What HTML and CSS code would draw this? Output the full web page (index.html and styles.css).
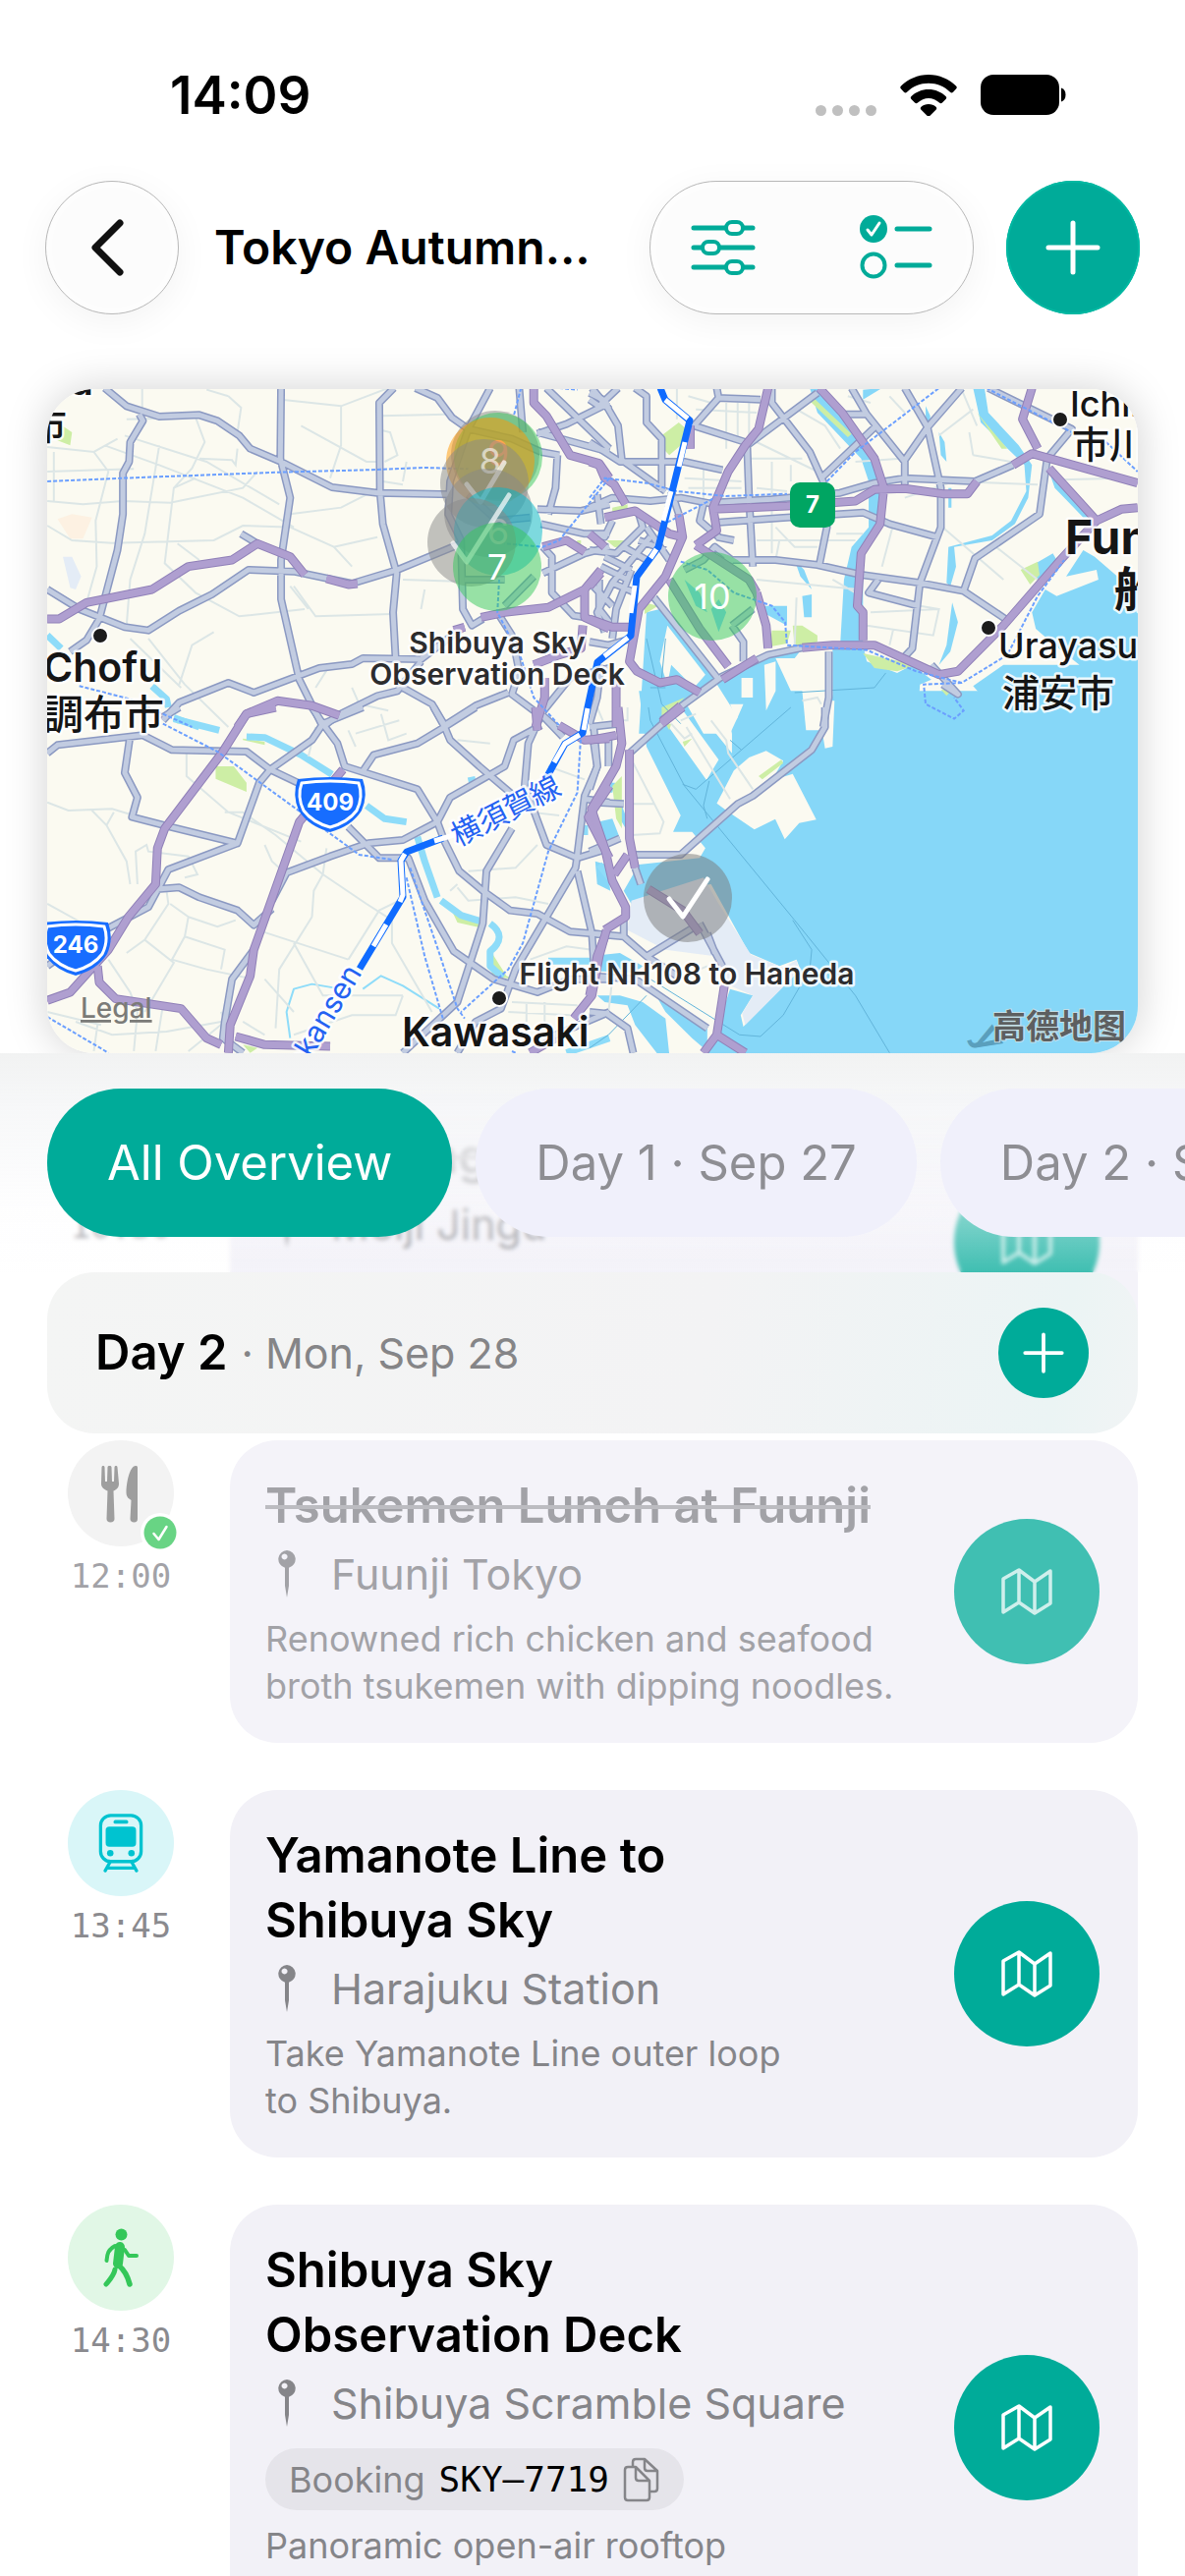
FILE: index.html
```html
<!DOCTYPE html>
<html lang="en">
<head>
<meta charset="utf-8">
<meta name="viewport" content="width=device-width, initial-scale=1">
<title>Tokyo Autumn</title>
<link rel="stylesheet" href="styles.css">
</head>
<body>
<svg class="defs" aria-hidden="true">
  <symbol id="i-map" viewBox="0 0 52 50">
    <path d="M2 12v34l16-10 16 11 16-10V4L34 15 18 3zM18 3v33M34 15v32" fill="none" stroke="currentColor" stroke-width="3.500" stroke-linejoin="round"/>
  </symbol>
  <symbol id="i-pin" viewBox="0 0 18 48">
    <path fill-rule="evenodd" d="M9 0a9 9 0 0 1 2 17.700V36L9 48 7 36V17.700A9 9 0 0 1 9 0zM6.500 3.500a3 3 0 1 0 .1 0z" fill="currentColor"/>
  </symbol>
  <symbol id="i-plus" viewBox="0 0 56 56">
    <path d="M28 3v50M3 28h50" fill="none" stroke="currentColor" stroke-width="5" stroke-linecap="round"/>
  </symbol>
</svg>
<div class="screen">
  <header class="status">
    <time>14:09</time>
    <div class="status-icons">
      <svg class="cell" viewBox="0 0 62 11" aria-hidden="true"><g fill="#c0c0c0"><circle cx="5.500" cy="5.500" r="5.500"/><circle cx="22.500" cy="5.500" r="5.500"/><circle cx="39.500" cy="5.500" r="5.500"/><circle cx="56.500" cy="5.500" r="5.500"/></g></svg>
      <svg class="wifi" viewBox="0 0 58 42" aria-hidden="true"><path d="M29 0C40 0 50 4.500 57 11.500c1 1 1 2 0 3l-3 3.200c-1 1-2 1-3 0C45 12 37.500 8.800 29 8.800S13 12 7 17.700c-1 1-2 1-3 0L1 14.500c-1-1-1-2 0-3C8 4.500 18 0 29 0z"/><path d="M29 15c7 0 13 2.700 17.500 7 1 1 1 2 0 3L43 28.500c-1 1-2 1-3 0-3-2.700-7-4.500-11-4.500s-8 1.800-11 4.500c-1 1-2 1-3 0L11.500 25c-1-1-1-2 0-3C16 17.700 22 15 29 15z"/><path d="M29 30c3 0 5.500 1 7.500 2.700 1 1 1 2 0 3l-6 6c-1 1-2 1-3 0l-6-6c-1-1-1-2 0-3C23.500 31 26 30 29 30z"/></svg>
      <svg class="batt" viewBox="0 0 88 42" aria-hidden="true"><rect width="80" height="41" rx="13"/><path d="M82 13.500c3 1 4.500 3.500 4.500 7s-1.500 6-4.500 7z"/></svg>
    </div>
  </header>

  <nav class="toolbar">
    <button class="glass round" aria-label="Back"><svg class="chev" viewBox="0 0 44 58"><path d="M30 4 5 29l25 25" fill="none" stroke="#111" stroke-width="7" stroke-linecap="round" stroke-linejoin="round"/></svg></button>
    <h1>Tokyo Autumn…</h1>
    <div class="glass group">
      <button aria-label="Filter"><svg class="sliders" viewBox="0 0 66 56"><g fill="none" stroke="currentColor" stroke-width="5" stroke-linecap="round"><path d="M3 8h32M54 8h9M3 28h8M31 28h32M3 48h32M54 48h9"/><g stroke-width="4"><rect x="36" y="2" width="17" height="12" rx="6"/><rect x="12" y="22" width="17" height="12" rx="6"/><rect x="36" y="42" width="17" height="12" rx="6"/></g></g></svg></button>
      <button aria-label="Checklist"><svg class="check" viewBox="0 0 74 66"><circle cx="14" cy="14" r="14" fill="currentColor"/><path d="m8 15 4 5 8-12" fill="none" stroke="#fff" stroke-width="3" stroke-linecap="round" stroke-linejoin="round"/><circle cx="14" cy="51" r="11.500" fill="none" stroke="currentColor" stroke-width="4"/><path d="M38 14h33M38 51h33" stroke="currentColor" stroke-width="5" stroke-linecap="round"/></svg></button>
    </div>
    <button class="accent round" aria-label="Add"><svg class="plus-l"><use href="#i-plus"/></svg></button>
  </nav>

  <section class="map" aria-label="Trip map">
  <svg viewBox="0 0 1110 676" preserveAspectRatio="xMidYMid slice">
    <defs>
      <g id="roads">
        <path transform="matrix(.37 0 0 .3333 -8 -6)" d="M180 15L240 70 330 102 440 97 490 115 550 160 580 200 665 240 805 318 930 335 1135 340M665 15L663 230 690 350 665 540 665 660 715 905 780 1050M975 15L935 60 937 330 945 430 983 580 973 700 980 840M275 95L285 115 250 180 247 240 230 275 230 400 215 510 165 720 130 785 85 820M22 630L110 690 235 745 300 755 385 695 475 645 575 570 700 575 860 612 985 570 1160 490M555 460L600 490M340 1030L385 975 520 915 590 945 770 870 860 858 890 840 1050 843 1160 750M780 1050L820 1015 930 955 985 940 1050 850M1035 15L1095 45 1135 105 1180 140 1240 15M1180 140L1130 300 1125 400 1160 480 1165 690 1190 740 1220 720M1000 930L1080 980 1115 1045 1200 985 1290 945M1320 15L1330 150M1395 15L1568 200M1568 60L1450 125 1370 155M1370 150L1568 210M1425 220L1420 320 1400 400M1380 210L1430 220M1180 340L1260 420 1350 410M1370 385L1490 390 1568 370M1380 430L1500 460 1568 460M1385 500L1410 530 1410 640 1470 710 1500 715M1385 580L1500 520 1568 500M1260 700L1300 770 1320 880 1300 950 1360 1000M1540 600L1540 690 1568 730M1568 870L1460 900 1380 1010 1420 1050M1170 600L1280 600M1360 590L1280 680M1180 140L1300 170 1380 210M1520 15L1568 80"/>
        <path transform="matrix(.3865 0 0 .3333 552 -6)" d="M0 30L35 50 75 130 85 235 200 330M75 15L25 70 0 50M120 15L150 40 150 120 190 170 190 330M335 15L340 45 275 130M335 45L450 50M275 130L410 180M0 180L80 240 250 240 350 265M480 15V60L580 210 615 300 625 440 605 555M600 30L415 190 420 350 430 560M320 365L480 355 660 335 750 305 830 290 1015 300 1115 250M340 425L500 412 720 395 790 430 915 470 870 610 850 810 830 835M355 540L490 540 600 555 715 585 870 610 985 635 1095 720M665 95L730 95 690 15M730 95L830 240 830 310M830 15L890 135 980 15M890 135L830 235M890 135L925 320 925 440 870 610M755 130L610 290M1050 15L1270 140 1205 230 1185 400 1015 535 985 635M560 808L470 830 350 895 190 1030M170 655L340 905M375 740L405 790 405 850M375 740L430 690M630 820L630 960 615 1050M760 600L735 640 865 680M0 380L60 350 160 360 240 350 330 370M300 370L290 420 340 470M335 470L380 480M0 460L40 470 60 420M0 510L70 520 140 440 130 400M160 470L60 610 20 700 40 760M110 570L70 690 60 780M40 530L110 570M90 500L150 540M130 480L200 510M60 610L120 640M10 620L60 680M100 600L30 560M150 440L210 540M215 330L235 400M20 340L30 430M0 790L50 800 110 780M30 860L20 960 0 1040M380 545L330 500 300 540 250 570M900 860L970 950 930 920"/>
        <path transform="matrix(.37 0 0 .3333 -8 324)" d="M22 140L50 115 285 85 365 130 570 135 635 190 750 100 780 50M340 30L385 0M635 190L605 230 545 415 360 365 255 335 270 275 235 200 250 85M545 415L355 495 300 610 180 680M22 790L60 760M635 190L720 235M325 555L385 550 440 580 545 620 590 665 640 615M640 590L680 505 800 455 905 415 1000 405 1095 350 1130 275 1225 215 1280 180 1305 100 1380 55M750 0L780 50 890 0M780 50L820 110 840 180 1040 250 1095 350 1115 410 1155 500 1220 560 1295 620 1370 630 1460 685 1568 695M890 195L920 145 1040 110 1115 60 1200 0M1085 0L1115 60 1130 100 1210 180 1300 265M850 365L935 460 1015 460 1060 590 1140 745 1250 830 1370 870 1460 830 1568 830M1300 370L1230 500 1220 660 1150 900 1000 1055M1390 0L1345 110 1335 240 1395 420 1480 460 1568 430M1480 450L1475 490 1310 800 1270 920 1200 960 1150 1055M1480 500L1520 690 1525 780M1525 60L1535 180 1500 270 1480 450M1500 280L1568 290M590 740L530 830 510 960 505 1010 560 1055M1380 20L1440 90M1400 1010L1568 930"/>
        <path transform="matrix(.3865 0 0 .3333 552 324)" d="M240 0L105 140M120 490L135 540M120 450L240 450 390 295 430 270 585 130 620 60 620 0M0 60L75 50M10 100L20 180 0 250M50 80L50 180M20 290L90 295M0 440L80 400M0 690L90 700 150 760 270 675M90 640L90 700M150 760L230 820M290 660L350 790M310 690L330 750M0 820L120 830 310 980M0 930L45 935 100 980 115 1055"/>
      </g>
      <g id="express">
        <path transform="matrix(.37 0 0 .3333 -8 -6)" d="M22 720L55 720 130 670 310 630 410 560 530 540 600 490 690 530 730 585M790 597L850 615 875 612M545 1050L570 1010 655 970 750 985 825 1015M1215 715L1280 700 1400 685 1500 630 1545 570M1360 15L1360 60 1395 100 1460 220 1540 245 1568 290M1385 500L1450 480 1500 515M1500 630L1500 715 1568 750M1495 740L1490 810 1430 830 1360 860M1390 900L1390 960 1365 1050M1140 755L1170 745"/>
        <path transform="matrix(.3865 0 0 .3333 552 -6)" d="M470 15L445 140 410 190 365 270 325 380 335 450 280 495M325 385L520 375 700 360 750 325 830 322 930 338 995 338 1020 300M1115 250L1165 215 1443 305M605 15L665 90 750 230 775 320 765 430 715 520 705 680 720 700 720 785M1165 15L1140 110 1180 200M1210 260L1335 420 1240 540 1180 620 1090 740 970 880 920 890 750 800 640 800 560 808M1335 420L1400 385 1443 380M210 600L290 750 365 865M440 640L465 740 470 810M280 495L420 600 440 640M40 410L120 390 210 460 245 470 200 590 130 690 105 850 125 880 185 915 230 905 290 945M0 240L25 250 40 290 65 310 95 370M235 400L245 470M0 720L60 745 130 745M70 900L70 1050M440 840L350 905M240 985L190 1035M265 130V200M0 460L40 500M0 620L30 580"/>
        <path transform="matrix(.37 0 0 .3333 -8 324)" d="M650 0L570 20 505 135 345 370 325 430 320 540 245 640 190 740 85 870 22 895M835 190L715 350 590 740 580 820 525 970 520 1055M1568 240L1510 335 1568 460M1365 0L1370 70M1430 55L1500 100 1568 95M1560 680L1540 760 1520 880 1470 950M160 790L165 840 210 890 390 920 460 1010 500 1030M540 1005L620 1030 800 1035M1350 1055L1420 1010"/>
        <path transform="matrix(.3865 0 0 .3333 552 324)" d="M245 0L190 50M105 130V400L120 490M155 555L245 620 290 690M75 0L85 110 70 180 5 310 40 430 60 530 95 610 95 640 40 680M100 450L65 510M355 850L335 1000 300 1055M335 1000L410 1055M40 700L20 760 0 880M0 100L70 85"/>
      </g>
      <g id="shield"><path d="M-33-26Q0-30 33-26 39-10 32 6 22 22 0 28-22 22-32 6-39-10-33-26z" fill="#176dff"/><path d="M-29-22Q0-26 29-22 34-8 27 6 18 18 0 23-18 18-27 6-34-8-29-22z" fill="none" stroke="#fff" stroke-width="3"/></g>
    </defs>
    <rect width="1110" height="676" fill="#fbfaf1"/>
    <g fill="#86d7f8">
      <path transform="matrix(.3865 0 0 .3333 552 -6)" d="M150 700L185 690 210 730 270 785 340 890 420 850 520 812 560 818 660 800 670 600 690 500 735 440 735 300 715 230 600 90 580 15 610 15 660 90 745 230 775 320 765 430 720 520 720 800 730 850 810 885 850 860 900 905 870 920 865 1000 960 1030 1000 990 1010 1060 1080 1060 1078 1015 1010 925 1090 860 1290 860 1225 800 1175 750 1165 700 1200 630 1230 650 1340 600 1335 570 1255 590 1300 510 1330 530 1390 590 1450 640V1070H130z"/>
      <path transform="matrix(.3865 0 0 .3333 552 -6)" d="M1010 15H1040L1050 90 1130 190 1165 250 1155 350 1120 430 1060 480 960 500 965 560 950 620 940 610 945 500 1060 465 1110 420 1150 330 1145 250 1030 120zM1210 270L1330 410 1300 410 1225 320zM540 540l15 50 30 40-20-60zM955 670l15 60-20 90-30 40 20-60zM885 70l12 30v50l-12-40zM920 150l15 30 5 60-15-20zM945 320h8v60h-8zM720 20l50-5-50 35zM250 600l40 40 20 60-30-20zM320 690l20-30 20 40-20 60zM560 650l25-5v70h-20zM440 680h80v60l-80-50zM1160 560l60-40 10 20-50 60z"/>
      <path transform="matrix(.3865 0 0 .3333 552 324)" d="M130-50L150 120 240 330 220 380 270 380 305 430 290 460 130 480 110 520 90 560 110 600 200 560 320 540 420 750 500 790 545 770 555 800 405 975 398 940 430 880 370 860 330 1000 300 1060H1450V-50zM50 200h25l-15 60h-15zM75 270l20 60v40l-20-40zM20 350l40-10 20 60-40 30zM15 470l30 10 10 80-35-20zM0 760l80-10 60 40-20 20-120-5zM20 880l60 0 60 20 60 50 10 110h-30l-60-90-20-60-60-10zM160 850l60 60 90 70 0 70-40-40-70-80z"/>
    </g>
    <g fill="#fbfaf1">
      <path transform="matrix(.3865 0 0 .3333 552 -6)" d="M205 740l40 60 60 90-30 40-60-70-10 60-20-70zM490 840h50l20-30h80v140l-10 110h-60l-10-120h-30zM460 860l30-10v90l-25 60zM250 970l80-60 60 110-20 50h-70zM400 900h30v60h-30z"/>
      <path transform="matrix(.3865 0 0 .3333 552 324)" d="M190 30L240 0 340 160 308 222zM300 0h60l15 80 0 60-70-100zM370-10h35l-18 48zM565-20h80l-5 140-20 5-10-70-40 0zM335 293l45-100 40-40 45-20 45 30-30 60 55-20 62 140-45 10-38 50-25-62-55 32-70-55zM60 30h60v200h-60z"/>
    </g>
    <path transform="matrix(.3865 0 0 .3333 552 324)" d="M110 590L300 520 340 600 425 755 510 795 545 772 552 805 410 970 402 935 430 880 370 850 330 760 200 740 100 680z" fill="#e4ecf6"/>
    <g fill="#cdeea5">
      <path transform="matrix(.3865 0 0 .3333 552 -6)" d="M190 160l45-40 20 20-15 50-30 30-25-30zM60 380l40-10v30h-40zM45 480h65l-5 30-40-10zM1135 570l45-25 5 40-25 30zM145 670l35 10-35 25zM720 825l140 35-50 20-60-10zM480 755l50 0-10 40-45 10zM535 740h25l40 30v20l-60 20zM590 45l100 110-10 10-100-110zM1020 90l80 110h-15zM190 990l60-30-60 70zM925 935h30l-15 20z"/>
      <path transform="matrix(.37 0 0 .3333 -8 324)" d="M485 180l50 0 35 50v28l-85-40zM370 28l40 12-30 10zM560 95l60 10 0 10-60-15zM1130 610l80 50v12l-60-15zM1245 750l40 70 20 10-60-10zM560 1030l40 10-20 15z"/>
      <path transform="matrix(.3865 0 0 .3333 552 324)" d="M445 210l60-50 5 10-55 50zM60 240l25-30 0 160-15-30zM200 50l15 0-5 20zM245 105l25-10-20 25z"/>
      <path transform="matrix(.37 0 0 .3333 -8 -6)" d="M50 120l40 30-5 40-35-15zM1480 480h10v15h-15z"/>
    </g>
    <path fill="#fdf1e2" transform="matrix(.37 0 0 .3333 -8 -6)" d="M50 415L90 400 145 410 120 475 85 475z"/>
    <path fill="#e4ecf6" transform="matrix(.37 0 0 .3333 -8 -6)" d="M65 530L90 530 115 590 100 630 85 625z"/>
    <g fill="none" stroke="#8edcf9" stroke-width="7" stroke-linejoin="round">
      <path transform="matrix(.37 0 0 .3333 -8 -6)" d="M22 770L60 810M310 925L350 965 355 990M370 1022L440 1050"/>
      <path transform="matrix(.37 0 0 .3333 -8 324)" d="M370 35L495 70M570 90L620 92 720 145 805 205M900 300L950 340 1010 350M1040 395L1060 470 1095 580M1105 590L1160 635 1220 655M1240 660Q1290 700 1240 745L1240 790 1275 825M1400 775H1540M1180 225L1200 220M1500 360V390M1540 480L1568 520M1450 1055L1568 1010"/>
      <path stroke-width="2" transform="matrix(.37 0 0 .3333 -8 324)" d="M890 860L940 820 1000 850 1100 920M690 1010L680 930 700 860 750 845 830 860"/>
    </g>
    <g class="lane">
      <path transform="matrix(.3865 0 0 .3333 552 324)" d="M155 0L160 40 250 240 540 650 700 880 790 1055M535 650L585 740 580 800 510 940 450 1005 395 1000 160 830M245 235L280 250 530 0M315 225L300 300 310 340M370 100L400 130M0 1040L50 1000 150 880"/>
      <path transform="matrix(.3865 0 0 .3333 552 -6)" d="M540 945L750 930 780 885M160 930L200 930M150 780L190 980 240 1040M200 780L190 900"/>
    </g>
    <g class="minor">
      <path transform="matrix(.37 0 0 .3333 -8 -6)" d="M283 15V95M22 195L150 210 215 170M150 210L190 270 155 420 158 560 130 670M180 190L330 250 560 350 700 440M235 160L460 240 660 370M240 110L430 105 455 180 420 260 370 320 345 550 430 640 550 712 730 690M330 190L290 460 250 600 240 740M22 360L120 370 230 360 360 365 560 320 600 270M40 210V360M22 435L90 480 200 488 480 480 560 435 700 440M370 320L430 290M520 40L555 75 545 150M440 230L530 235 540 250 545 200M460 20L520 40M665 50L830 70 960 15M830 70L830 190 800 290M720 130L900 240 930 240M940 100L1120 95M945 145L965 150 985 220 950 240M690 400L830 380 900 340M690 440L810 500 860 560M810 500L930 470M700 620L760 712 970 705M690 620L740 690M380 490L440 540M480 760L420 800 385 920M300 780L400 920 520 1050M250 780L390 930M1000 300L1010 240M945 300L1000 310M1050 690L1060 630M1000 600L1150 605M860 930L880 980 960 1000M800 860L760 930M22 270L260 262"/>
      <path transform="matrix(.3865 0 0 .3333 552 -6)" d="M230 15V110M260 40L320 60M280 80L440 90M360 60V200M390 60V170M420 60V180M440 180L600 270M420 230H560M480 240V520M530 250V300M250 290L400 300M260 320H400M300 240V400M350 290V360M440 320L520 330M440 480H700M490 440L540 500 600 500M640 600L700 640M440 600L710 630M545 655L540 800M800 430L770 560M930 440L1090 600M830 350L960 300 1180 310M1000 150L1010 220M1010 220L1110 240M980 20L1020 130M920 160L1010 80M1070 500L1180 600M650 460H720M740 700L920 690 905 770 730 740M800 750L790 800M870 680L920 690M1240 295L1400 290M560 970L600 960 610 980M680 40L740 60M790 40L830 90M700 240L820 230M500 480L490 540M545 80L620 130 660 200"/>
      <path transform="matrix(.37 0 0 .3333 -8 324)" d="M22 290L80 315 200 310 260 330M145 315L185 360 240 470 250 540M185 360L205 320M270 540L265 440 295 420 300 440 410 455 435 510 400 520M22 600L120 660 190 750M350 560L355 600 290 710 240 750M360 600L410 640 400 700 365 770 460 800 590 830M290 710L370 780 290 930M410 640L490 670 540 650M400 700L510 740 500 800M190 770L250 870 270 930M405 130V210L520 320 720 410M510 320L560 320 650 390 780 510 900 600 970 650 970 720 1080 930M620 420L640 470 680 510M750 640L755 560 780 510 790 430M850 770L935 620 990 590M600 680L850 770M750 640L660 800 650 980M700 720L780 880 900 880 1000 880M700 1000L860 940 980 940 1000 880M620 830L700 930M100 960L200 1000 350 990 500 960M160 970L150 1050M270 930L260 1050M22 930L170 970M340 910L320 1050M560 960L620 1000M870 80L990 40M850 70L870 120M1150 550L1180 590 1310 580 1400 600M1180 500L1310 490 1370 420M1130 560L1150 540M940 20L960 100 1010 80M1280 250L1350 320 1430 330M1400 180L1500 220M1240 110L1150 100M1350 770L1450 730 1520 740M1300 900L1480 910M1290 930L1460 940M1340 900V960M1390 900V980M500 930L510 960 410 1050M760 60L740 150"/>
      <path transform="matrix(.3865 0 0 .3333 552 324)" d="M115 170L195 350 185 385 110 390M110 295H170M255 60L370 280M320 40L360 100 365 140 430 250M240 40L280 20M215 50L250 95 270 80M250 820L310 790M60 830L50 930M20 0L35 40M100 0V40H80"/>
    </g>
    <use href="#roads" class="casing"/><use href="#roads" class="fill"/>
    <use href="#express" class="ex-casing"/><use href="#express" class="ex-fill"/>
    <g class="rail">
      <path transform="matrix(.37 0 0 .3333 -8 -6)" d="M22 300L230 290 660 272 900 265 1060 258 1180 262M1325 15L1305 100M1568 290L1430 480 1385 500 1280 490M1265 600L1260 700 1325 840 1360 960 1430 1045M110 925L250 965 420 1050M1430 15L1480 20"/>
      <path transform="matrix(.3865 0 0 .3333 552 -6)" d="M0 350L40 290 150 305 230 330 360 345 520 338M205 425L330 350M625 300L700 210 920 15M1045 15L1270 150M1360 180L1443 270M240 545L310 570 380 640 480 680 515 730 520 800 730 815 860 880 980 915 1100 830 1180 650 1250 540M980 915L880 920 885 980 960 1025 985 1000 960 960"/>
      <path transform="matrix(.37 0 0 .3333 -8 324)" d="M340 50L490 135 880 450 970 465M1010 520L1060 760 1110 950M1020 490L1100 750 1150 920 1170 950M1490 80L1480 260 1400 440 1330 720 1290 800 1160 930M22 945L190 1055M1300 1050L1310 1055"/>
    </g>
    <path class="tr-case" d="M624 -1L629 11 654 32 622 161 600 191 594 251 560 278 550 324 545 350 527 361 508 396M403 457L366 471 360 480 362 517 318 590"/>
    <path class="tr-gap" d="M629 11L652 30M649 54L643 79M635 104L627 134M620 163L614 172M598 200L594 228M591 253L567 272M550 325L546 347M542 352L527 361 516 380M420 452L394 460M364 473L360 480 362 515 359 522M345 545L332 567"/>

    <g class="pins">
      <circle cx="456" cy="67" r="45" fill="#888"/>
      <circle cx="459" cy="69" r="45" fill="#34c759"/>
      <text class="nine" x="459" y="78">9</text>
      <circle cx="451" cy="74" r="45" fill="#ff9500"/>
      <circle cx="445" cy="96" r="45" fill="#888"/>
      <text x="451" y="86">8</text>
      <path d="M427 97l14 18 24-40"/>
      <circle cx="449" cy="126" r="45" fill="#888"/>
      <circle cx="459" cy="145" r="45" fill="#00b8cc"/>
      <text x="459" y="158">6</text>
      <circle cx="432" cy="156" r="45" fill="#888"/>
      <path d="M413 157l14 19 43-68"/>
      <circle cx="458" cy="181" r="45" fill="#34c759"/>
      <text class="solid" x="458" y="194">7</text>
      <circle cx="677" cy="211" r="45" fill="#34c759"/>
      <text class="solid" x="677" y="224">10</text>
      <circle cx="652" cy="518" r="45" fill="#777"/>
      <path class="solid" d="M633 519l14 18 25-38"/>
    </g>

    <g fill="#1c1c1c" stroke="#fff" stroke-width="2"><circle cx="54" cy="251" r="8"/><circle cx="1031" cy="31" r="8"/><circle cx="958" cy="243" r="8"/><circle cx="460" cy="620" r="8"/></g>
    <use href="#shield" x="288" y="423"/><use href="#shield" x="29" y="569"/>
    <rect x="756" y="95" width="46" height="46" rx="10" fill="#00a562"/>
    <g class="route"><text x="288" y="429">409</text><text x="29" y="574">246</text><text x="779" y="126">7</text></g>

    <g class="place">
      <text x="-4" y="298" class="mid">Chofu</text>
      <text x="-4" y="346" class="cjk big">調布市</text>
      <text x="-18" y="51" class="cjk">市</text>
      <text x="-2" y="6" class="mid">da</text>
      <text x="1041" y="28" class="reg">Ichikawa</text>
      <text x="1043" y="70" class="cjk">市川</text>
      <text x="1036" y="168" class="large">Funabashi</text>
      <text x="1086" y="221" class="cjk xl">船橋</text>
      <text x="968" y="274" class="reg">Urayasu</text>
      <text x="972" y="323" class="cjk">浦安市</text>
      <text x="361" y="669" class="mid">Kawasaki</text>
    </g>
    <g class="poi"><text x="458" y="269">Shibuya Sky</text><text x="458" y="301">Observation Deck</text><text x="651" y="606">Flight NH108 to Haneda</text></g>
    <g class="line-name"><text transform="translate(418 466) rotate(-27)">横須賀線</text><text transform="translate(321 594) rotate(-59)" text-anchor="end">Shinkansen</text></g>
    <text class="bay" transform="translate(942 657) rotate(60)">y</text>
    <text class="legal" x="34" y="640">Legal</text>
    <text class="brand" x="962" y="661">高德地图</text>
  </svg>
  </section>

  <main class="schedule">
    <div class="tabs" role="tablist">
      <button role="tab" aria-selected="true" class="tab on">All Overview</button>
      <button role="tab" aria-selected="false" class="tab">Day 1 · Sep 27</button>
      <button role="tab" aria-selected="false" class="tab">Day 2 · Sep 28</button>
    </div>
    <header class="day">
      <h2>Day 2</h2><span class="date">· Mon, Sep 28</span>
      <button class="accent add" aria-label="Add to Day 2"><svg class="plus-s"><use href="#i-plus"/></svg></button>
    </header>

    <ol class="timeline">
      <li class="stop done">
        <div class="when"><span class="badge grey"></span><time>10:30</time></div>
        <article class="card">
          <div class="info"><h3>Meiji Jingu Shrine</h3><p class="loc"><svg class="pin"><use href="#i-pin"/></svg>Meiji Jingu</p></div>
          <button class="go" aria-label="Open in map"><svg><use href="#i-map"/></svg></button>
        </article>
      </li>
      <li class="stop done">
        <div class="when"><span class="badge grey">
          <svg class="icon" viewBox="0 0 60 60"><path fill="currentColor" d="M12 2c1 0 1.500.6 1.500 1.500L14 18h2l.5-14.500C16.500 2.600 17 2 18.500 2S20.500 2.600 20.500 3.500L21 18h2l.5-14.500C23.500 2.600 24 2 25 2s1.500.6 1.500 1.500L28 20c0 4-2 6-5.500 7.500L23.500 56c0 2-1.500 3.500-4 3.500S15.500 58 15.500 56l1-28.500C13 26 10 24 10 20l.5-16.500C10.500 2.600 11 2 12 2zM45 2c1.500 0 2 .6 2 2v52c0 2-1 3.500-3.500 3.500S39.500 58 39.500 56L40.500 37C37 35 35.500 33 35.500 29 36 15 40 2 45 2z"/></svg>
          <svg class="tick" viewBox="0 0 40 40"><circle cx="20" cy="20" r="20" fill="#fff"/><circle cx="20" cy="20" r="16.500" fill="#68d484"/><path d="m13.500 21 5 6 8-13" fill="none" stroke="#fff" stroke-width="2.500" stroke-linecap="round" stroke-linejoin="round"/></svg>
        </span><time>12:00</time></div>
        <article class="card">
          <div class="info"><h3>Tsukemen Lunch at Fuunji</h3><p class="loc"><svg class="pin"><use href="#i-pin"/></svg>Fuunji Tokyo</p><p class="note">Renowned rich chicken and seafood<br>broth tsukemen with dipping noodles.</p></div>
          <button class="go" aria-label="Open in map"><svg><use href="#i-map"/></svg></button>
        </article>
      </li>
      <li class="stop">
        <div class="when"><span class="badge cyan">
          <svg class="icon" viewBox="0 0 60 64"><rect x="8" y="2" width="44" height="50" rx="11" fill="none" stroke="currentColor" stroke-width="3.500"/><rect x="22" y="7" width="16" height="4" rx="2" fill="currentColor"/><rect x="13.500" y="14" width="33" height="22" rx="4" fill="currentColor"/><circle cx="18.500" cy="43" r="3.500" fill="currentColor"/><circle cx="41.500" cy="43" r="3.500" fill="currentColor"/><path d="m18 53-5 9M42 53l5 9M16 59h28" stroke="currentColor" stroke-width="3.500" stroke-linecap="round"/></svg>
        </span><time>13:45</time></div>
        <article class="card">
          <div class="info"><h3>Yamanote Line to<br>Shibuya Sky</h3><p class="loc"><svg class="pin"><use href="#i-pin"/></svg>Harajuku Station</p><p class="note">Take Yamanote Line outer loop<br>to Shibuya.</p></div>
          <button class="go" aria-label="Open in map"><svg><use href="#i-map"/></svg></button>
        </article>
      </li>
      <li class="stop">
        <div class="when"><span class="badge green">
          <svg class="icon" viewBox="0 0 60 60"><g fill="none" stroke="currentColor" stroke-linecap="round" stroke-linejoin="round"><path d="M29 19l-2 17" stroke-width="10"/><path d="M24 18c-7 4-8 8-8.500 15" stroke-width="4"/><path d="M28 38c6 5 9 11 11 19" stroke-width="5.500"/><path d="M24 42c-1 6-5 10-9 15" stroke-width="5"/><path d="M34 22l4 6h8" stroke-width="4"/></g><circle cx="30.500" cy="6.500" r="6" fill="currentColor"/></svg>
        </span><time>14:30</time></div>
        <article class="card">
          <div class="info"><h3>Shibuya Sky<br>Observation Deck</h3><p class="loc"><svg class="pin"><use href="#i-pin"/></svg>Shibuya Scramble Square</p>
            <button class="booking"><span>Booking</span><b>SKY–7719</b><svg viewBox="0 0 38 46"><g fill="none" stroke="currentColor" stroke-width="2.500" stroke-linejoin="round"><path d="M10 10V5q0-3 3-3h9l13 12v18q0 3-3 3h-4M22 2v9q0 3 3 3h10"/><path d="M5 10h8l14 14v17q0 3-3 3H5q-3 0-3-3V13q0-3 3-3zM13 10v11q0 3 3 3h11"/></g></svg></button>
            <p class="note">Panoramic open-air rooftop<br>above Shibuya Crossing.</p></div>
          <button class="go" aria-label="Open in map"><svg><use href="#i-map"/></svg></button>
        </article>
      </li>
    </ol>
  </main>
</div>
</body>
</html>
```
FILE: styles.css
```css
* { box-sizing: border-box; margin: 0; padding: 0; }
body { background: #fff; color: #000; font-family: Inter, "Noto Sans CJK JP", sans-serif; }
button { border: 0; background: none; font: inherit; color: inherit; cursor: pointer; }
svg { display: block; }
.defs { position: absolute; width: 0; height: 0; }
.screen { height: 100vh; display: flex; flex-direction: column; overflow: hidden; }

.status { flex: none; height: 184px; padding: 66px 120px 0 173px; display: flex; justify-content: space-between; align-items: flex-start; }
.status time { font-size: 53px; line-height: 62px; font-weight: 600; }
.status-icons { display: flex; align-items: flex-end; gap: 24px; padding-top: 10px; }
.cell { width: 62px; height: 11px; }
.wifi { width: 58px; height: 42px; }
.batt { width: 88px; height: 42px; }

.toolbar { flex: none; display: flex; align-items: center; padding: 0 46px; height: 136px; }
.toolbar h1 { flex: 1; min-width: 0; margin-left: 36px; font-size: 48px; line-height: 60px; font-weight: 600; white-space: nowrap; }
.round { width: 136px; height: 136px; border-radius: 50%; display: grid; place-items: center; flex: none; }
.glass { background: #fcfcfc; border: 1px solid #b8b8b8; box-shadow: 0 8px 36px rgba(0,0,0,.05), inset 0 0 16px #fff; }
.chev { width: 44px; height: 58px; }
.group { height: 136px; width: 330px; margin-right: 33px; border-radius: 68px; display: flex; justify-content: space-between; padding: 0 41px; align-items: center; color: #00ab99; }
.sliders { width: 66px; height: 56px; }
.check { width: 74px; height: 66px; }
.accent { background: #00ab99; color: #fff; box-shadow: inset 0 0 0 2px #00b8a2; }
.plus-l { width: 56px; height: 56px; }

.map { flex: none; margin: 76px 48px 0; aspect-ratio: 1110 / 676; border-radius: 48px; overflow: hidden; box-shadow: 0 0 44px rgba(0,0,0,.18); }
.map svg { width: 100%; height: 100%; }
.map path { vector-effect: non-scaling-stroke; }
.minor { fill: none; stroke: #dce6e6; stroke-width: 2; }
.lane { fill: none; stroke: #62b4da; stroke-width: 1; }
.casing { fill: none; stroke: #8b99c2; stroke-width: 8; stroke-linejoin: round; }
.fill { fill: none; stroke: #c2cce1; stroke-width: 5; stroke-linejoin: round; }
.ex-casing { fill: none; stroke: #9080b8; stroke-width: 9; stroke-linejoin: round; }
.ex-fill { fill: none; stroke: #af9fd0; stroke-width: 7; stroke-linejoin: round; }
.rail { fill: none; stroke: #6b9fff; stroke-width: 2; stroke-dasharray: 4 2; }
.tr-case { fill: none; stroke: #0f6bff; stroke-width: 7; stroke-linejoin: round; }
.tr-gap { fill: none; stroke: #fff; stroke-width: 5; stroke-linejoin: round; }
.pins circle { fill-opacity: .5; }
.pins text { fill: #fff; font-size: 36px; text-anchor: middle; opacity: .6; }
.pins .nine { fill: #ffb0a0; opacity: 1; }
.pins path { fill: none; stroke: #fff; stroke-width: 5; stroke-linecap: round; stroke-linejoin: round; opacity: .7; }
.pins .solid { opacity: 1; }
.place, .poi, .line-name { paint-order: stroke; stroke: #fff; stroke-opacity: .85; stroke-width: 5; stroke-linejoin: round; }
.place { fill: #151515; }
.place .mid { font-size: 41px; font-weight: 600; }
.place .reg { font-size: 36px; font-weight: 500; }
.place .large { font-size: 48px; font-weight: 700; }
.place .cjk { font-family: "Noto Sans CJK JP", sans-serif; font-size: 38px; font-weight: 500; }
.place .big { font-size: 41px; }
.place .xl { font-size: 48px; font-weight: 700; }
.poi { fill: #2c2c2e; font-size: 30px; font-weight: 600; text-anchor: middle; }
.line-name { fill: #2462f2; font-size: 30px; }
.route { fill: #fff; font-size: 24px; font-weight: 700; text-anchor: middle; }
.bay { fill: #5a9fbd; font-size: 41px; font-weight: 600; }
.legal { fill: #7b7b78; font-size: 28px; font-weight: 500; text-decoration: underline; }
.brand { fill: #5d5f60; font-family: "Noto Sans CJK SC", sans-serif; font-size: 34px; font-weight: 700; paint-order: stroke; stroke: #c4dfe8; stroke-width: 2; }

.schedule { position: relative; flex: 1; min-height: 0; }
.tabs { position: absolute; z-index: 2; inset: 0 0 auto; height: 223px; padding: 36px 48px; display: flex; gap: 24px; overflow: hidden; backdrop-filter: blur(2px); background: linear-gradient(rgba(241,242,242,.97), rgba(246,247,248,.9) 25%, rgba(252,252,253,.4) 70%, rgba(255,255,255,0)); }
.tab { flex: none; height: 151px; padding: 0 61px; border-radius: 75px; background: #f0f0fb; color: #8e8e93; font-size: 49px; font-weight: 400; white-space: nowrap; }
.tab.on { background: #00ab99; color: #fff; }
.day { position: absolute; z-index: 3; inset: 223px 48px auto; height: 164px; border-radius: 48px; padding: 0 50px 0 49px; display: flex; align-items: center; background: linear-gradient(100deg, #f4f5f4, #f3f3f4 60%, #ebf4f4 92%, #f1f4f5); }
.day h2 { font-size: 49px; font-weight: 600; line-height: 60px; }
.date { margin-left: 14px; font-size: 43px; color: #858587; }
.add { margin-left: auto; width: 92px; height: 92px; border-radius: 50%; display: grid; place-items: center; box-shadow: none; }
.plus-s { width: 42px; height: 42px; }

.timeline { list-style: none; padding: 38px 48px 0; display: flex; flex-direction: column; gap: 48px; height: 100%; overflow: hidden; }
.stop { flex: none; display: grid; grid-template-columns: 150px 1fr; gap: 36px; }
.when { display: flex; flex-direction: column; align-items: center; gap: 10px; }
.when time { font-family: "DejaVu Sans Mono", monospace; font-size: 34px; line-height: 40px; color: #8a8a8e; }
.badge { position: relative; width: 108px; height: 108px; border-radius: 50%; display: grid; place-items: center; }
.badge .icon { width: 60px; height: 60px; }
.grey { background: #f3f3f3; color: #9e9e9e; }
.cyan { background: #d9f6f8; color: #00c3d0; }
.green { background: #e1f7e6; color: #34c759; }
.tick { position: absolute; right: -6px; bottom: -6px; width: 40px; height: 40px; }
.card { min-height: 308px; padding: 34px 39px 34px 36px; border-radius: 48px; background: #f2f1f7; display: flex; align-items: center; justify-content: space-between; }
.info { align-self: flex-start; white-space: nowrap; }
.info h3 { font-size: 49px; line-height: 66px; font-weight: 600; }
.loc { margin-top: 6px; display: flex; align-items: center; font-size: 43px; line-height: 60px; color: #858589; }
.pin { width: 18px; height: 48px; margin: 0 36px 0 13px; }
.note { margin-top: 12px; font-size: 36px; line-height: 48px; color: #858589; }
.booking { margin: 16px 0 4px; height: 63px; border-radius: 32px; padding: 0 24px; display: flex; align-items: center; gap: 14px; background: #e5e4ea; font-size: 36px; color: #858589; }
.booking b { font-family: "DejaVu Sans Mono", monospace; font-weight: 400; color: #000; }
.booking svg { width: 38px; height: 46px; }
.go { flex: none; width: 148px; height: 148px; border-radius: 50%; background: #00ab99; color: #fff; display: grid; place-items: center; }
.go svg { width: 52px; height: 50px; }
.done .card { background: #f4f3f9; }
.done h3 { color: #a2a2a7; text-decoration: line-through; text-decoration-color: #bcbcc1; text-decoration-thickness: 4px; }
.done .loc, .done .note, .done time { color: #a2a2a7; }
.done .go { background: #40bfb2; color: #cfefec; }
```
